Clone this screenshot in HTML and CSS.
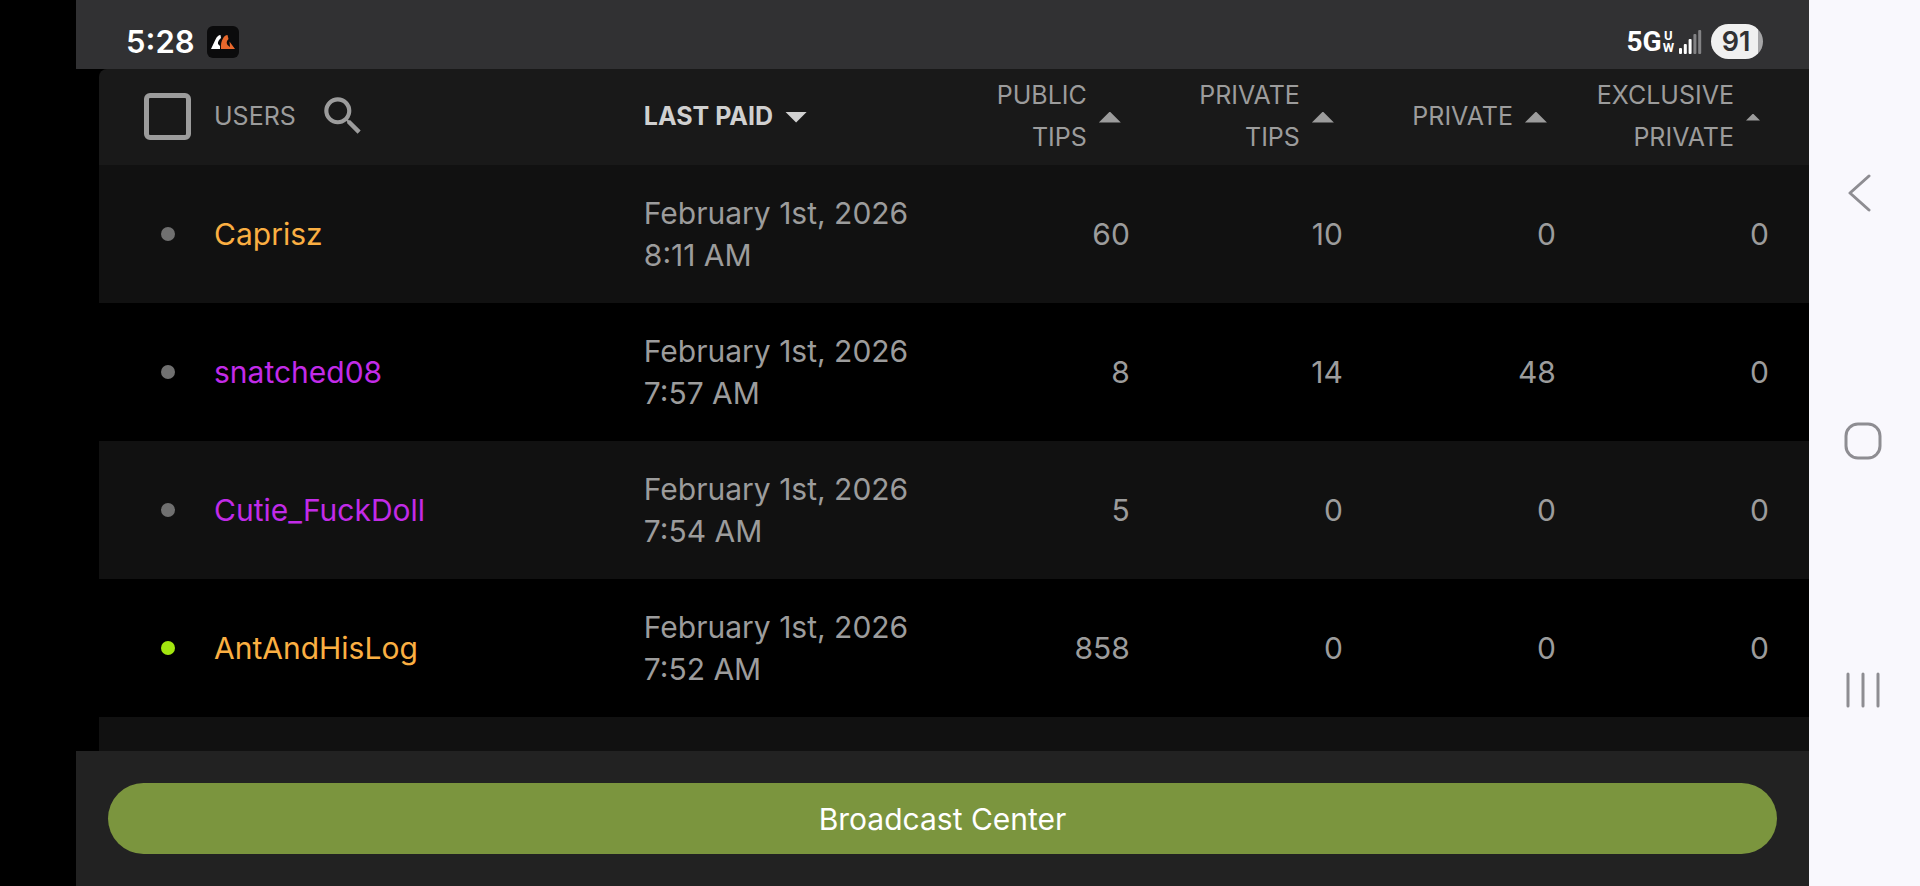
FILE: index.html
```
<!DOCTYPE html>
<html lang="en">
<head>
    <meta charset="UTF-8">
    <meta name="viewport" content="width=device-width, initial-scale=1.0">
    <title>Users</title>
    <link rel="stylesheet" href="styles.css">
</head>
<body>
    <div class="app">
        <header class="status">
            <div class="status-side">
                <span class="clock">5:28</span>
                <svg class="app-icon" viewBox="0 0 32 32" aria-hidden="true">
                    <rect width="32" height="32" rx="6" fill="#0b0b0c"/>
                    <path d="M4 23 8.500 13.500Q10.500 9 13.500 9L14 12Q10.500 15 11 18L13 20V23Z" fill="#fff"/>
                    <path d="M14 23Q13.500 16 16 12.500 17.500 9 20.500 9L21.500 13Q18.500 16 20.500 19L23 21 22.500 15.500 28 23Z" fill="#e8682c"/>
                </svg>
            </div>
            <div class="status-side">
                <span class="network">5G</span>
                <span class="network-band"><span>U</span><span>W</span></span>
                <svg class="signal" viewBox="0 0 24 24" aria-hidden="true">
                    <g fill="#fff">
                        <rect x="0" y="18" width="3" height="6" rx="1"/>
                        <rect x="4.800" y="14" width="3" height="10" rx="1"/>
                        <rect x="9.600" y="9" width="3" height="15" rx="1"/>
                    </g>
                    <g fill="#838385">
                        <rect x="14.400" y="4" width="3" height="20" rx="1"/>
                        <rect x="19.200" y="0" width="3" height="24" rx="1"/>
                    </g>
                </svg>
                <span class="battery">91</span>
            </div>
        </header>

        <main class="list">
            <table class="users">
                <colgroup>
                    <col class="col-check">
                    <col>
                    <col class="col-date">
                    <col class="col-num">
                    <col class="col-num">
                    <col class="col-num">
                    <col class="col-num">
                </colgroup>
                <thead>
                    <tr>
                        <th class="check"><input type="checkbox" class="select-all" aria-label="Select all users"></th>
                        <th>
                            <div class="head">
                                <span>USERS</span>
                                <button class="search-btn" aria-label="Search users">
                                    <svg viewBox="0 0 24 24"><path fill="currentColor" d="M15.500 14h-.79l-.28-.27A6.471 6.471 0 0 0 16 9.500 6.500 6.500 0 1 0 9.500 16c1.610 0 3.090-.59 4.230-1.570l.27.28v.79l5 4.990L20.490 19l-4.990-5zm-6 0C7.010 14 5 11.990 5 9.500S7.010 5 9.500 5 14 7.010 14 9.500 11.990 14 9.500 14z"/></svg>
                                </button>
                            </div>
                        </th>
                        <th><button class="head sort active">LAST PAID <i class="arrow down"></i></button></th>
                        <th><button class="head sort right"><span>PUBLIC<br>TIPS</span> <i class="arrow"></i></button></th>
                        <th><button class="head sort right"><span>PRIVATE<br>TIPS</span> <i class="arrow"></i></button></th>
                        <th><button class="head sort right"><span>PRIVATE</span> <i class="arrow"></i></button></th>
                        <th><button class="head sort right"><span>EXCLUSIVE<br>PRIVATE</span> <i class="arrow small"></i></button></th>
                    </tr>
                </thead>
                <tbody>
                    <tr>
                        <td class="check"><span class="dot"></span></td>
                        <td><a href="#" class="name orange">Caprisz</a></td>
                        <td>February 1st, 2026<br>8:11 AM</td>
                        <td class="num">60</td>
                        <td class="num">10</td>
                        <td class="num">0</td>
                        <td class="num">0</td>
                    </tr>
                    <tr>
                        <td class="check"><span class="dot"></span></td>
                        <td><a href="#" class="name purple">snatched08</a></td>
                        <td>February 1st, 2026<br>7:57 AM</td>
                        <td class="num">8</td>
                        <td class="num">14</td>
                        <td class="num">48</td>
                        <td class="num">0</td>
                    </tr>
                    <tr>
                        <td class="check"><span class="dot"></span></td>
                        <td><a href="#" class="name purple">Cutie_FuckDoll</a></td>
                        <td>February 1st, 2026<br>7:54 AM</td>
                        <td class="num">5</td>
                        <td class="num">0</td>
                        <td class="num">0</td>
                        <td class="num">0</td>
                    </tr>
                    <tr>
                        <td class="check"><span class="dot online"></span></td>
                        <td><a href="#" class="name orange">AntAndHisLog</a></td>
                        <td>February 1st, 2026<br>7:52 AM</td>
                        <td class="num">858</td>
                        <td class="num">0</td>
                        <td class="num">0</td>
                        <td class="num">0</td>
                    </tr>
                    <tr>
                        <td colspan="7"></td>
                    </tr>
                </tbody>
            </table>
        </main>

        <footer class="bottom">
            <button class="broadcast-btn">Broadcast Center</button>
        </footer>
    </div>

    <nav class="system-nav">
        <button aria-label="Back">
            <svg viewBox="0 0 40 40"><path d="M26 4 7 21 26 38"/></svg>
        </button>
        <button aria-label="Home">
            <svg viewBox="0 0 40 40"><rect x="3" y="3" width="34" height="34" rx="12"/></svg>
        </button>
        <button aria-label="Recent apps">
            <svg viewBox="0 0 40 40"><path d="M5 4v32M20 4v32M35 4v32"/></svg>
        </button>
    </nav>
</body>
</html>
```

FILE: styles.css
```
*{
    box-sizing: border-box;
}

body{
    margin: 0;
    height: 100vh;
    display: flex;
    background-color: #000;
    color: #9c9c9c;
    font-family: Inter, "Liberation Sans", sans-serif;
    font-size: 30px;
    line-height: 42px;
    overflow: hidden;
}

button{
    padding: 0;
    border: none;
    background: none;
    color: inherit;
    font: inherit;
    cursor: pointer;
}

.app{
    flex: 1;
    min-width: 0;
    margin-left: 76px;
    display: flex;
    flex-direction: column;
}

/* status bar */
.status{
    flex: none;
    height: 69px;
    padding: 14px 46px 0 50px;
    display: flex;
    align-items: center;
    justify-content: space-between;
    background-color: #313133;
    color: #fff;
}

.status-side{
    display: flex;
    align-items: center;
}

.clock{
    font-size: 31px;
    font-weight: 600;
    margin-right: 12px;
}

.app-icon{
    width: 32px;
    height: 32px;
}

.network{
    font-family: Roboto, sans-serif;
    font-size: 28px;
    font-weight: 700;
}

.network-band{
    display: flex;
    flex-direction: column;
    margin: 0 5px 0 1px;
    font-family: Roboto, sans-serif;
    font-size: 13px;
    font-weight: 700;
    line-height: 12px;
    text-align: center;
}

.signal{
    width: 24px;
    height: 24px;
    margin-right: 8px;
}

.battery{
    width: 52px;
    height: 35px;
    padding-right: 2px;
    border-radius: 18px;
    background: linear-gradient(to right, #f0f0f0 47px, #a5a5a7 47px);
    color: #313133;
    font-size: 27px;
    font-weight: 600;
    line-height: 35px;
    text-align: center;
}

/* users table */
.list{
    flex: 1;
    min-height: 0;
    margin-left: 23px;
    overflow: hidden;
    border-top-left-radius: 8px;
}

.users{
    width: 100%;
    table-layout: fixed;
    border-collapse: collapse;
}

.col-check{
    width: 115px;
}

.col-date{
    width: 18.3%;
}

.col-num{
    width: 12.46%;
}

.users th,
.users td{
    padding: 0;
    text-align: left;
}

.users th{
    height: 96px;
    padding-bottom: 2px;
    background-color: #191919;
    font-size: 25px;
    font-weight: 400;
}

.users td{
    height: 138px;
}

.users tbody tr:nth-child(odd){
    background-color: #111;
}

.users .check{
    padding-left: 45px;
}

.users .num{
    padding-right: 40px;
    text-align: right;
}

.select-all{
    display: block;
    appearance: none;
    width: 47px;
    height: 47px;
    margin: 0;
    border: 5px solid #9c9c9c;
    border-radius: 6px;
}

.head{
    display: flex;
    align-items: center;
}

.sort{
    gap: 12px;
    width: 100%;
}

.sort.right{
    justify-content: flex-end;
    padding-right: 49px;
    text-align: right;
}

.sort.active{
    color: #d0d0d0;
    font-weight: 700;
}

.arrow{
    flex: none;
    width: 22px;
    height: 11px;
    margin-top: 2px;
    background-color: currentColor;
    clip-path: polygon(50% 0, 100% 100%, 0 100%);
}

.arrow.down{
    clip-path: polygon(0 0, 100% 0, 50% 100%);
}

.arrow.small{
    width: 14px;
    height: 7px;
}

.search-btn{
    width: 50px;
    height: 50px;
    margin-left: 22px;
}

.search-btn svg{
    display: block;
}

.dot{
    display: block;
    width: 14px;
    height: 14px;
    margin-left: 17px;
    border-radius: 50%;
    background-color: #707070;
}

.dot.online{
    background-color: #a3e60f;
}

.name{
    text-decoration: none;
}

.orange{
    color: #fbaf42;
}

.purple{
    color: #c22be8;
}

/* bottom bar */
.bottom{
    flex: none;
    padding: 32px;
    background-color: #222;
}

.broadcast-btn{
    display: block;
    width: 100%;
    height: 71px;
    border-radius: 36px;
    background-color: #7b953e;
    color: #fff;
}

/* android navigation */
.system-nav{
    flex: none;
    width: 111px;
    padding: 68px 4px 72px 0;
    display: flex;
    flex-direction: column;
    align-items: center;
    justify-content: space-around;
    background-color: #f9f8fd;
}

.system-nav svg{
    display: block;
    width: 40px;
    height: 40px;
    fill: none;
    stroke: #8e8d92;
    stroke-width: 3;
    stroke-linecap: round;
    stroke-linejoin: round;
}
```
